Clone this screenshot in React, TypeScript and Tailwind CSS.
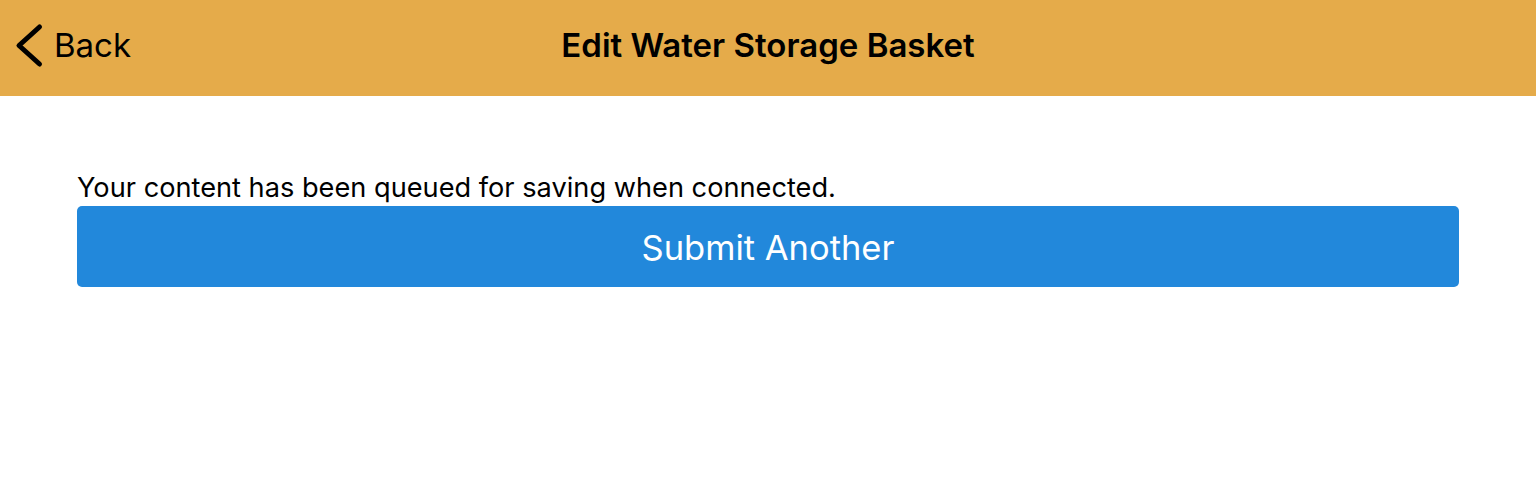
import React from 'react';

const App: React.FC = () => {
  return (
    <div className="min-h-[498px] w-full bg-white" style={{ fontFamily: 'Inter, "Noto Sans", sans-serif' }}>
      <div className="relative flex h-[96px] items-center justify-center bg-[#e5ab4a]">
        <button className="absolute left-[14px] top-0 flex h-[90px] items-center gap-[10px] text-black">
          <svg width="30" height="42" viewBox="0 0 30 42" fill="none" className="overflow-visible">
            <path d="M25.5 3 L5 21.5 L25.5 40" stroke="#000" strokeWidth="5" strokeLinecap="round" strokeLinejoin="round" />
          </svg>
          <span className="text-[33px] leading-none">Back</span>
        </button>
        <h1 className="-mt-[4px] text-[33px] font-semibold text-black">Edit Water Storage Basket</h1>
      </div>
      <div className="px-[77px] pt-[74px]">
        <p className="text-[27.2px] leading-[36px] text-black">Your content has been queued for saving when connected.</p>
        <button className="flex h-[81px] w-full items-center justify-center rounded-[5px] bg-[#2288db] pt-[3px] text-[34.5px] text-white">
          Submit Another
        </button>
      </div>
    </div>
  );
};

export default App;
